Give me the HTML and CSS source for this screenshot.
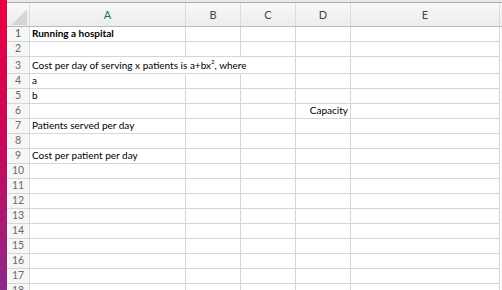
FILE: index.html
```html
<!DOCTYPE html>
<html lang="en">
<head>
  <meta charset="UTF-8">
  <title>Running a hospital</title>
  <link rel="stylesheet" href="styles.css">
</head>
<body>
<div class="app">
  <div class="strip"></div>
  <div class="sheet">
    <div class="topline"></div>
    <div class="row head">
      <div class="rn corner"></div>
      <div class="cell active">A</div>
      <div class="cell">B</div>
      <div class="cell">C</div>
      <div class="cell">D</div>
      <div class="cell">E</div>
    </div>
    <div class="row"><div class="rn active">1</div><div class="cell bold">Running a hospital</div><div class="cell"></div><div class="cell"></div><div class="cell"></div><div class="cell"></div></div>
    <div class="row"><div class="rn">2</div><div class="cell"></div><div class="cell"></div><div class="cell"></div><div class="cell"></div><div class="cell"></div></div>
    <div class="row tall"><div class="rn">3</div><div class="cell spill"><span>Cost per day of serving x patients is a+bx<sup>2</sup>, where</span></div><div class="cell spill"></div><div class="cell"></div><div class="cell"></div><div class="cell"></div></div>
    <div class="row"><div class="rn">4</div><div class="cell">a</div><div class="cell"></div><div class="cell"></div><div class="cell"></div><div class="cell"></div></div>
    <div class="row"><div class="rn">5</div><div class="cell">b</div><div class="cell"></div><div class="cell"></div><div class="cell"></div><div class="cell"></div></div>
    <div class="row"><div class="rn">6</div><div class="cell"></div><div class="cell"></div><div class="cell"></div><div class="cell right">Capacity</div><div class="cell"></div></div>
    <div class="row"><div class="rn">7</div><div class="cell">Patients served per day</div><div class="cell"></div><div class="cell"></div><div class="cell"></div><div class="cell"></div></div>
    <div class="row"><div class="rn">8</div><div class="cell"></div><div class="cell"></div><div class="cell"></div><div class="cell"></div><div class="cell"></div></div>
    <div class="row"><div class="rn">9</div><div class="cell">Cost per patient per day</div><div class="cell"></div><div class="cell"></div><div class="cell"></div><div class="cell"></div></div>
    <div class="row"><div class="rn">10</div><div class="cell"></div><div class="cell"></div><div class="cell"></div><div class="cell"></div><div class="cell"></div></div>
    <div class="row"><div class="rn">11</div><div class="cell"></div><div class="cell"></div><div class="cell"></div><div class="cell"></div><div class="cell"></div></div>
    <div class="row"><div class="rn">12</div><div class="cell"></div><div class="cell"></div><div class="cell"></div><div class="cell"></div><div class="cell"></div></div>
    <div class="row"><div class="rn">13</div><div class="cell"></div><div class="cell"></div><div class="cell"></div><div class="cell"></div><div class="cell"></div></div>
    <div class="row"><div class="rn">14</div><div class="cell"></div><div class="cell"></div><div class="cell"></div><div class="cell"></div><div class="cell"></div></div>
    <div class="row"><div class="rn">15</div><div class="cell"></div><div class="cell"></div><div class="cell"></div><div class="cell"></div><div class="cell"></div></div>
    <div class="row"><div class="rn">16</div><div class="cell"></div><div class="cell"></div><div class="cell"></div><div class="cell"></div><div class="cell"></div></div>
    <div class="row"><div class="rn">17</div><div class="cell"></div><div class="cell"></div><div class="cell"></div><div class="cell"></div><div class="cell"></div></div>
    <div class="row"><div class="rn">18</div><div class="cell"></div><div class="cell"></div><div class="cell"></div><div class="cell"></div><div class="cell"></div></div>
  </div>
</div>
</body>
</html>
```

FILE: styles.css
```css
body{
  margin:0;
  background:#fff;
  font-family:Lato, "Liberation Sans", sans-serif;
  font-size:10px;
  color:#000;
  overflow:hidden;
}
.app{
  display:flex;
  height:290px;
}
.strip{
  width:7px;
  flex:none;
  background:linear-gradient(#ea0040, #c8085a 50%, #8a2a88);
}
.sheet{
  flex:1;
  overflow:hidden;
}
.topline{
  height:2px;
  background:#e9e9e9;
}
.row{
  display:grid;
  grid-template-columns:23px 156px 55px 55px 55px 149px;
  height:15px;
}
.row.tall{
  height:17px;
}
.row.head{
  height:23px;
  border-top:1px solid #acacac;
  border-bottom:1px solid #b9b9b9;
  background:linear-gradient(#f8f8f8, #ededed);
  color:#444;
  font-size:11px;
}
.cell, .rn{
  box-sizing:border-box;
  border-right:1px solid #d6d6d6;
  border-bottom:1px solid #d6d6d6;
  padding:0 2px 1px;
  white-space:nowrap;
  line-height:13px;
  display:flex;
  align-items:flex-end;
}
.rn{
  justify-content:center;
  color:#6a6a6a;
  background:#f6f6f6;
  font-size:10.5px;
}
.head .cell, .head .rn{
  border-bottom:none;
  border-right-color:#dcdcdc;
  justify-content:center;
  align-items:center;
  line-height:21px;
  padding:0;
  background:none;
}
.head .cell.active, .rn.active{
  color:#1e7145;
}
.corner{
  background:linear-gradient(to bottom right, transparent 50%, #d5d5d5 50%) no-repeat right 2px bottom 1px / 15px 15px !important;
}
.bold{
  font-weight:bold;
}
.spill{
  border-right-color:transparent;
  overflow:visible;
}
.right{
  justify-content:flex-end;
}
sup{
  font-size:6px;
  line-height:0;
  vertical-align:5px;
}
```
